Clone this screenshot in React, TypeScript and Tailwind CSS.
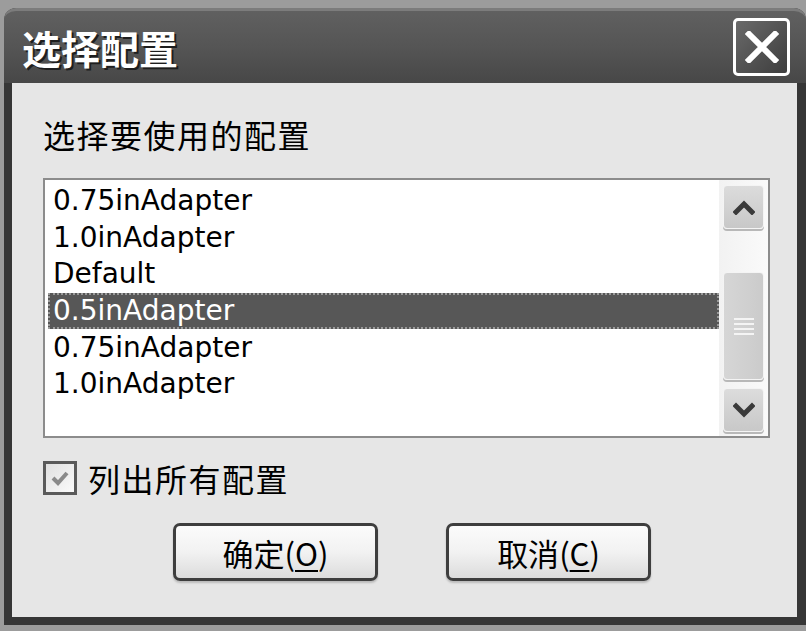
const items = ['0.75inAdapter', '1.0inAdapter', 'Default', '0.5inAdapter', '0.75inAdapter', '1.0inAdapter'];

function Chevron({ up }: { up?: boolean }) {
	return (
		<svg width="22" height="16" viewBox="0 0 22 16">
			<path
				d={up ? 'M3 13 L11 5 L19 13' : 'M3 4 L11 12 L19 4'}
				fill="none"
				stroke="#3a3a3a"
				strokeWidth="5"
				strokeLinecap="square"
			/>
		</svg>
	);
}

function ScrollButton({ up }: { up?: boolean }) {
	return (
		<div className="w-[41px] h-[44px] mx-auto rounded-[4px] border border-[#f4f4f4] bg-gradient-to-b from-[#dcdcdc] to-[#c8c8c8] shadow-[0_2px_0_#b8b8b8] flex items-center justify-center">
			<Chevron up={up} />
		</div>
	);
}

function Button({ label, hot, rest }: { label: string; hot: string; rest: string }) {
	return (
		<button className="w-[205px] h-[58px] rounded-[7px] border-[3px] border-[#3e3e3e] bg-gradient-to-b from-[#fbfbfb] via-[#f2f2f2] to-[#dcdcdc] shadow-[0_2px_2px_#bbb] flex items-center justify-center text-[31px] text-black leading-none">
			<span>{label}(</span>
			<span className="underline underline-offset-4 decoration-2">{hot}</span>
			<span>{rest}</span>
		</button>
	);
}

export default function App() {
	return (
		<div className="w-[806px] h-[631px] bg-[#9c9c9c] pt-[8px] pl-[4px] overflow-hidden" style={{ fontFamily: '"Noto Sans CJK SC", "DejaVu Sans", sans-serif' }}>
			<div className="w-[802px] h-[617px] rounded-t-[12px] bg-[#363636] flex flex-col">
				{/* title bar */}
				<div className="h-[75px] shrink-0 rounded-t-[12px] border-t-[3px] border-[#7c7c7c] bg-gradient-to-b from-[#606060] via-[#555555] to-[#474747] flex items-center justify-between pl-[18px] pr-[16px]">
					<span className="text-white text-[39px] font-bold leading-none [text-shadow:2px_2px_0_#1e1e1e]">选择配置</span>
					<div className="w-[57px] h-[58px] rounded-[5px] border-[3px] border-white bg-gradient-to-br from-[#6a6a6a] to-[#3e3e3e] flex items-center justify-center">
						<svg width="34" height="32" viewBox="0 0 34 32">
							<path d="M4 3 L30 29 M30 3 L4 29" stroke="white" strokeWidth="6" strokeLinecap="square" />
						</svg>
					</div>
				</div>
				{/* body */}
				<div className="flex-1 ml-[8px] mr-[9px] mb-[8px] bg-[#e6e6e6] pl-[31px] pr-[27px] pt-[33px] flex flex-col">
					<div className="text-[32px] leading-[36px] tracking-[1.5px] text-black">选择要使用的配置</div>
					<div className="mt-[26px] h-[260px] border-2 border-[#8c8c8c] bg-white flex">
						<div className="flex-1 pt-[3px] pl-[3px]" style={{ fontFamily: '"DejaVu Sans", sans-serif' }}>
							{items.map((t, i) => (
								<div
									key={i}
									className={
										i === 3
											? 'h-[36.6px] flex items-center pl-[5px] text-[28px] bg-[#575757] text-white outline-2 outline-dotted outline-[#9a9a9a] -outline-offset-2'
											: 'h-[36.6px] flex items-center pl-[5px] text-[28px] text-black'
									}
								>
									{t}
								</div>
							))}
						</div>
						<div className="w-[49px] shrink-0 bg-gradient-to-r from-[#f2f2f2] to-[#fafafa] flex flex-col pt-[5px] pb-[4px]">
							<ScrollButton up />
							<div className="mt-[43px] w-[41px] h-[108px] mx-auto rounded-[4px] border border-[#f4f4f4] bg-gradient-to-r from-[#d6d6d6] to-[#cbcbcb] shadow-[0_2px_0_#b8b8b8] flex flex-col items-center justify-center gap-[3px]">
								<div className="w-[20px] h-[2px] bg-[#f4f4f4]" />
								<div className="w-[20px] h-[2px] bg-[#f4f4f4]" />
								<div className="w-[20px] h-[2px] bg-[#f4f4f4]" />
								<div className="w-[20px] h-[2px] bg-[#f4f4f4]" />
							</div>
							<div className="flex-1" />
							<ScrollButton />
						</div>
					</div>
					<div className="mt-[22px] flex items-center gap-[11px]">
						<div className="w-[34px] h-[34px] border-[3px] border-[#5a5a5a] bg-gradient-to-br from-[#e0e0e0] to-[#fafafa] flex items-center justify-center">
							<svg width="20" height="16" viewBox="0 0 20 16">
								<path d="M3 8 L8 13 L17 3" fill="none" stroke="#8a8a8a" strokeWidth="4" />
							</svg>
						</div>
						<span className="text-[32px] leading-[36px] tracking-[1.5px] text-black">列出所有配置</span>
					</div>
					<div className="mt-[27px] ml-[130px] flex gap-[68px]">
						<Button label="确定" hot="O" rest=")" />
						<Button label="取消" hot="C" rest=")" />
					</div>
				</div>
			</div>
		</div>
	);
}
